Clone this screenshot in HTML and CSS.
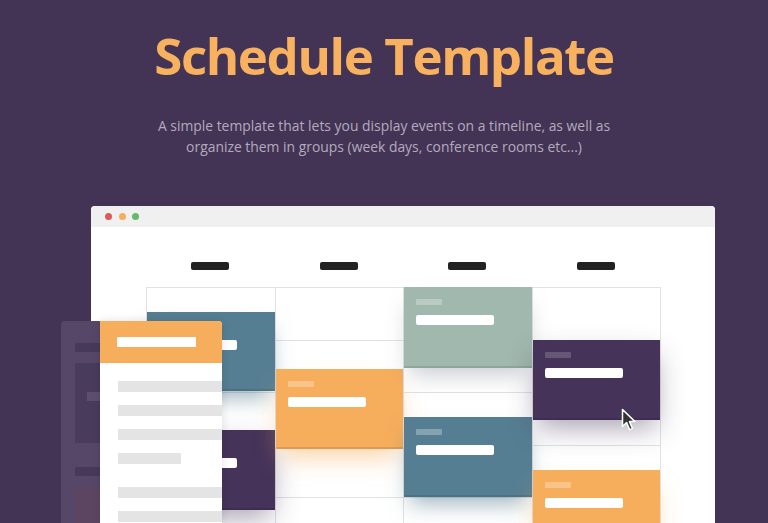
FILE: index.html
```html
<!DOCTYPE html>
<html lang="en">
<head>
<meta charset="utf-8">
<title>Schedule Template</title>
<link rel="stylesheet" href="styles.css">
</head>
<body>
<header class="hero">
  <h1 class="title">Schedule Template</h1>
  <p class="lead">A simple template that lets you display events on a timeline, as well as<br>organize them in groups (week days, conference rooms etc...)</p>
</header>
<div class="stage">
  <div class="window">
    <div class="window-bar">
      <span class="dot dot-red"></span>
      <span class="dot dot-orange"></span>
      <span class="dot dot-green"></span>
    </div>
    <div class="window-body">
      <div class="heads">
        <div class="head"><span class="head-bar"></span></div>
        <div class="head"><span class="head-bar"></span></div>
        <div class="head"><span class="head-bar"></span></div>
        <div class="head"><span class="head-bar"></span></div>
      </div>
      <div class="grid">
        <div class="col">
          <div class="cell"></div><div class="cell"></div><div class="cell"></div><div class="cell"></div><div class="cell"></div>
          <div class="event ev-teal ev-c1a"><span class="ev-label"></span><span class="ev-name"></span></div>
          <div class="event ev-purple ev-c1b"><span class="ev-label"></span><span class="ev-name"></span></div>
        </div>
        <div class="col">
          <div class="cell"></div><div class="cell"></div><div class="cell"></div><div class="cell"></div><div class="cell"></div>
          <div class="event ev-orange ev-c2a"><span class="ev-label"></span><span class="ev-name"></span></div>
        </div>
        <div class="col">
          <div class="cell"></div><div class="cell"></div><div class="cell"></div><div class="cell"></div><div class="cell"></div>
          <div class="event ev-sage ev-c3a"><span class="ev-label"></span><span class="ev-name"></span></div>
          <div class="event ev-teal ev-c3b"><span class="ev-label"></span><span class="ev-name"></span></div>
        </div>
        <div class="col">
          <div class="cell"></div><div class="cell"></div><div class="cell"></div><div class="cell"></div><div class="cell"></div>
          <div class="event ev-purple ev-c4a"><span class="ev-label"></span><span class="ev-name"></span>
            <svg class="cursor" width="17" height="24" viewBox="0 0 17 24" aria-hidden="true">
              <path d="M1.5 1.5 L1.5 18.5 L5.6 14.6 L8.6 21.6 L11.4 20.4 L8.5 13.6 L14 13.6 Z" fill="#333" stroke="#fff" stroke-width="1.5" stroke-linejoin="round"/>
            </svg>
          </div>
          <div class="event ev-orange ev-c4b"><span class="ev-label"></span><span class="ev-name"></span></div>
        </div>
      </div>
    </div>
  </div>
  <div class="side-back">
    <span class="sb-bar"></span>
    <div class="sb-box"><span class="sb-inner"></span></div>
    <span class="sb-bar"></span>
    <div class="sb-box sb-box-warm"></div>
  </div>
  <div class="side-panel">
    <div class="sp-head"><span class="sp-title"></span></div>
    <div class="sp-list">
      <span class="sp-row"></span>
      <span class="sp-row"></span>
      <span class="sp-row"></span>
      <span class="sp-row sp-row-short"></span>
      <span class="sp-row sp-row-gap"></span>
      <span class="sp-row"></span>
    </div>
  </div>
</div>
</body>
</html>
```

FILE: styles.css
```css
html, body {
  margin: 0;
  padding: 0;
}

body {
  height: 523px;
  overflow: hidden;
  background: #433355;
  font-family: "Open Sans", "DejaVu Sans", sans-serif;
}

.hero {
  text-align: center;
  padding-top: 25px;
}

.title {
  margin: 0;
  font-size: 51px;
  line-height: 60px;
  font-weight: 700;
  letter-spacing: -1.4px;
  color: #f8b15f;
}

.lead {
  margin: 30px 0 0;
  font-size: 13.9px;
  line-height: 21px;
  color: #b3abbd;
}

.stage {
  position: relative;
  margin: 49px 0 0 91px;
  width: 624px;
  height: 317px;
}

.window {
  background: #fff;
  border-radius: 4px 4px 0 0;
  height: 317px;
  overflow: hidden;
}

.window-bar {
  height: 21px;
  background: #f0f0f0;
  display: flex;
  align-items: center;
  gap: 6.5px;
  padding-left: 14px;
}

.dot {
  width: 7px;
  height: 7px;
  border-radius: 50%;
}

.dot-red { background: #dc5a5a; }
.dot-orange { background: #f5ae5a; }
.dot-green { background: #62bb6d; }

.window-body {
  padding-left: 55px;
}

.heads {
  display: grid;
  grid-template-columns: repeat(4, 128.5px);
  padding: 35px 0 17px;
}

.head {
  display: flex;
  justify-content: center;
}

.head-bar {
  width: 38px;
  height: 8px;
  border-radius: 2px;
  background: #222;
}

.grid {
  display: grid;
  grid-template-columns: repeat(4, 128.5px);
  width: 514px;
  border-top: 1px solid #e2e2e2;
  border-right: 1px solid #e2e2e2;
}

.col {
  position: relative;
  border-left: 1px solid #e2e2e2;
}

.cell {
  height: 52.5px;
  box-sizing: border-box;
  border-bottom: 1px solid #e2e2e2;
}

.event {
  position: absolute;
  left: 0;
  right: 0;
  height: 80px;
  box-sizing: border-box;
  padding: 12px;
  display: flex;
  flex-direction: column;
  align-items: flex-start;
  z-index: 1;
}

.ev-label {
  width: 26px;
  height: 6px;
  border-radius: 1px;
  background: rgba(255, 255, 255, 0.28);
}

.ev-name {
  width: 78px;
  height: 10px;
  margin-top: 10px;
  border-radius: 2px;
  background: #fff;
}

.ev-teal {
  background: #567e93;
  box-shadow: inset 0 -2px 0 rgba(0, 0, 0, 0.1), 0 12px 22px -6px rgba(70, 110, 130, 0.55);
}

.ev-orange {
  background: #f7ae5c;
  box-shadow: inset 0 -2px 0 rgba(0, 0, 0, 0.1), 0 14px 24px -6px rgba(247, 174, 92, 0.55);
}

.ev-sage {
  background: #a0b8ae;
  box-shadow: inset 0 -2px 0 rgba(0, 0, 0, 0.1), 0 12px 22px -6px rgba(110, 120, 135, 0.4);
}

.ev-purple {
  background: #45335a;
  box-shadow: inset 0 -2px 0 rgba(0, 0, 0, 0.1), 0 12px 28px -4px rgba(67, 51, 85, 0.45);
}

.ev-purple .ev-label {
  background: rgba(255, 255, 255, 0.18);
}

.ev-c1a { top: 24px; height: 79px; }
.ev-c1b { top: 142px; }
.ev-c2a { top: 81px; }
.ev-c3a { top: -1px; height: 81px; }
.ev-c3b { top: 129px; }
.ev-c4a { top: 52px; }
.ev-c4b { top: 182px; }

.cursor {
  position: absolute;
  left: 88px;
  top: 68px;
}

.side-back {
  position: absolute;
  z-index: 2;
  left: -30px;
  top: 115px;
  width: 140px;
  height: 202px;
  overflow: hidden;
  box-sizing: border-box;
  padding: 22px 0 0 14px;
  background: #564768;
  border-radius: 4px 4px 0 0;
  display: flex;
  flex-direction: column;
  align-items: flex-start;
}

.sb-bar {
  flex-shrink: 0;
  width: 100px;
  height: 9px;
  margin-bottom: 11px;
  border-radius: 1px;
  background: #47395a;
}

.sb-box {
  flex-shrink: 0;
  width: 110px;
  height: 80px;
  margin-bottom: 24px;
  box-sizing: border-box;
  padding: 29px 0 0 12px;
  background: #483b5c;
}

.sb-inner {
  display: block;
  width: 60px;
  height: 9px;
  background: #5d4e70;
}

.sb-box-warm {
  background: #5c4561;
}

.side-panel {
  position: absolute;
  z-index: 3;
  left: 9px;
  top: 115px;
  width: 122px;
  height: 202px;
  background: #fff;
  border-radius: 0 4px 0 0;
  box-shadow: 0 0 10px rgba(0, 0, 0, 0.12);
  overflow: hidden;
}

.sp-head {
  height: 42px;
  box-sizing: border-box;
  padding: 16px 0 0 17px;
  background: #f7ae5c;
}

.sp-title {
  display: block;
  width: 79px;
  height: 10px;
  border-radius: 1px;
  background: #fff;
}

.sp-list {
  padding: 18px 0 0 18px;
  display: flex;
  flex-direction: column;
  align-items: flex-start;
  gap: 13px;
}

.sp-row {
  flex-shrink: 0;
  width: 104px;
  height: 11px;
  background: #e4e4e4;
}

.sp-row-short {
  width: 63px;
}

.sp-row-gap {
  margin-top: 10px;
}
```
